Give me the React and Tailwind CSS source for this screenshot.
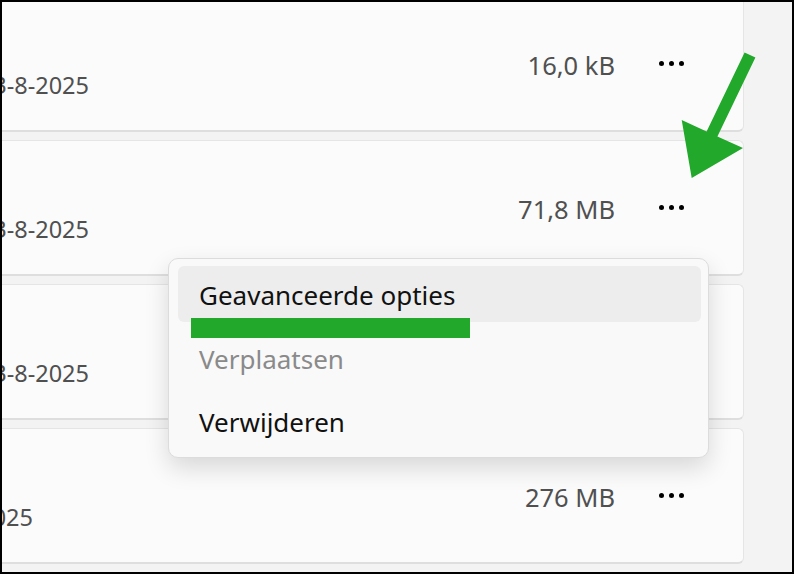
const rows = [
    { date: '13-8-2025', dateWidth: 'w-[98px]', size: '16,0 kB' },
    { date: '13-8-2025', dateWidth: 'w-[98px]', size: '71,8 MB' },
    { date: '13-8-2025', dateWidth: 'w-[98px]', size: '12,4 MB' },
    { date: '13-8-2025', dateWidth: 'w-[42px]', size: '276 MB' }
]

const Dots = () => (
    <div className="flex items-center gap-[5px]">
        <span className="h-[5px] w-[5px] rounded-full bg-black" />
        <span className="h-[5px] w-[5px] rounded-full bg-black" />
        <span className="h-[5px] w-[5px] rounded-full bg-black" />
    </div>
)

const AppRow = ({ date, dateWidth, size }) => (
    <div className="flex h-[136px] w-[754px] shrink-0 items-center rounded-[6px] border border-[#e5e5e5] border-b-2 border-b-[#dedede] bg-[#fbfbfb] pr-[59px]">
        <div className={`${dateWidth} flex justify-end overflow-hidden pt-[44px]`}>
            <span className="whitespace-nowrap text-[23.5px] text-[#505050]">{date}</span>
        </div>
        <div className="flex-1" />
        <div className="flex items-center gap-[44px]">
            <span className="pt-[4px] text-[25.5px] text-[#505050]">{size}</span>
            <Dots />
        </div>
    </div>
)

const ContextMenu = () => (
    <div className="absolute left-[166px] top-[256px] flex h-[200px] w-[541px] flex-col gap-[8px] rounded-[10px] border border-[#dcdcdc] bg-[#f9f9f9] pb-[8px] pl-[9px] pr-[7px] pt-[7px] shadow-[0_10px_24px_rgba(0,0,0,0.14)]">
        <div className="flex h-[56px] items-center rounded-[6px] bg-[#ededed] pl-[21px] pt-[3px] text-[26px] text-[#111111]">
            Geavanceerde opties
        </div>
        <div className="flex h-[56px] items-center pl-[21px] pt-[3px] text-[26px] text-[#8a8a8a]">
            Verplaatsen
        </div>
        <div className="flex h-[56px] items-center pl-[21px] pt-[3px] text-[26px] text-[#111111]">
            Verwijderen
        </div>
        <div className="absolute left-[22px] top-[59px] h-[20px] w-[279px] bg-[#22a82a]" />
    </div>
)

export default function App() {
    return (
        <div
            className="relative h-[574px] w-[794px] overflow-hidden border-2 border-black bg-[#f3f3f3]"
            style={{ fontFamily: '"Noto Sans", "Open Sans", sans-serif' }}
        >
            <div className="-ml-[12px] -mt-[6px] flex flex-col gap-[8px]">
                {rows.map((row, i) => (
                    <AppRow key={i} {...row} />
                ))}
            </div>

            <ContextMenu />

            <svg
                className="pointer-events-none absolute left-0 top-0"
                width="790"
                height="570"
                viewBox="2 2 790 570"
            >
                <polygon
                    points="744.6,52.4 755.4,57.6 717.4,136.6 743,148 691.7,178 681.7,120 706.6,131.4"
                    fill="#22a82a"
                />
            </svg>
        </div>
    )
}
